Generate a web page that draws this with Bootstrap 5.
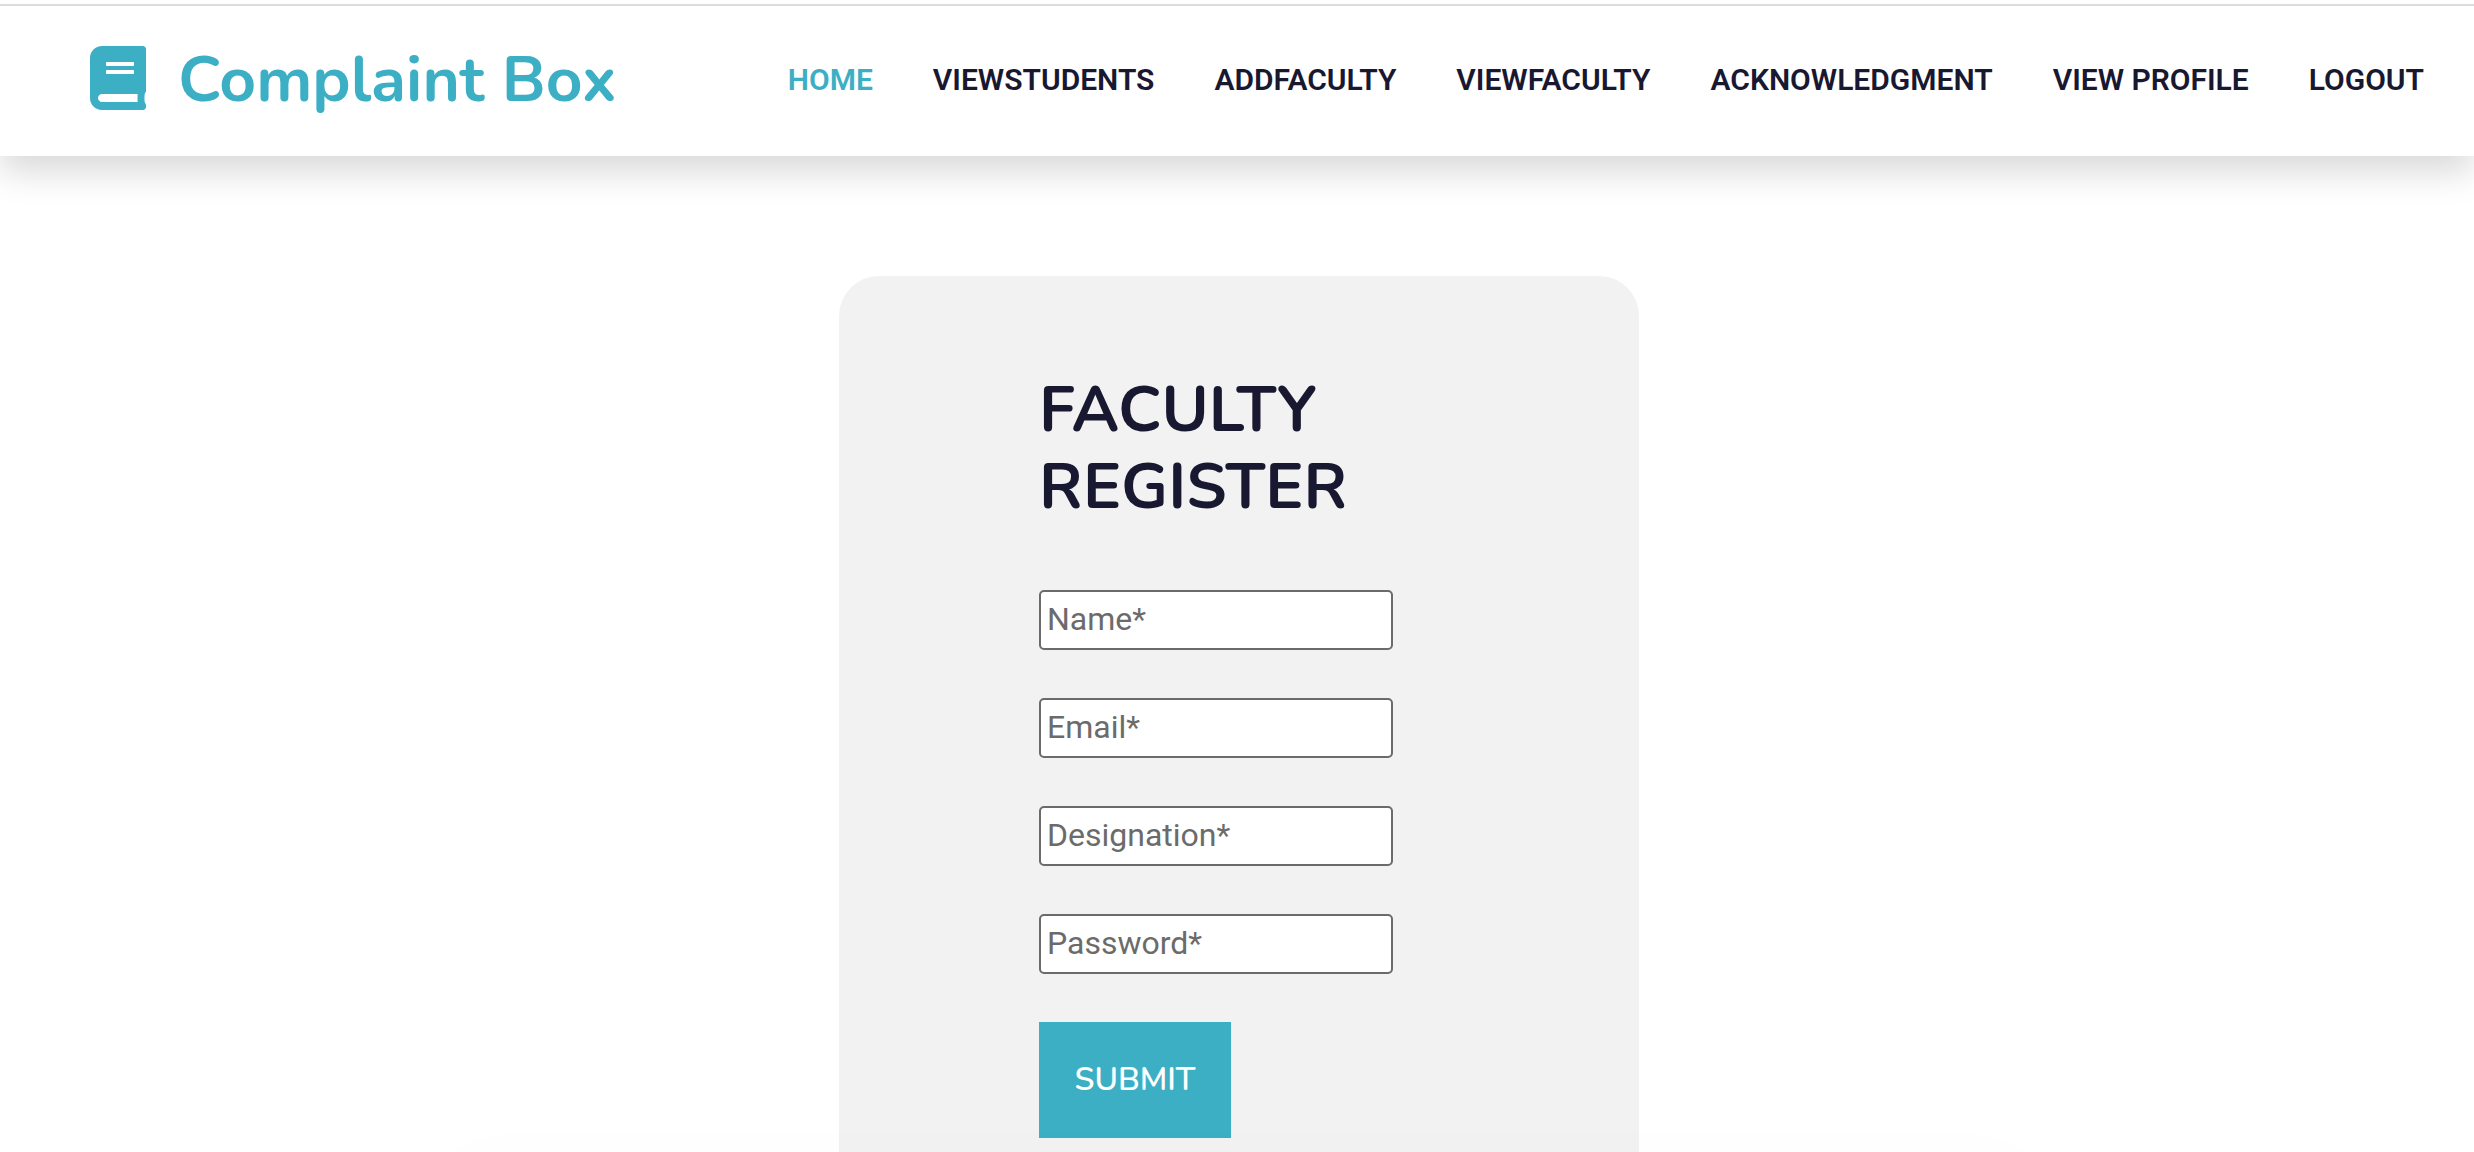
<!DOCTYPE html>
<html lang="en">
<head>
<meta charset="utf-8">
<meta name="viewport" content="width=device-width, initial-scale=1">
<title>Complaint Box</title>
<link href="https://cdn.jsdelivr.net/npm/bootstrap@5.3.0/dist/css/bootstrap.min.css" rel="stylesheet">
<style>
  :root { --brand: #3cafc5; --ink: #191831; --panel: #f2f2f2; --field: #6b6b6b; }
  body { font-family: Roboto, "Liberation Sans", sans-serif; font-size: 32px; color: var(--ink); background: #fff; }
  .site-header { padding-top: 4px; box-shadow: 0 16px 32px rgba(0, 0, 0, .15); }
  .site-bar { border-top: 2px solid #dcdcdc; min-height: 152px; padding: 0 50px 2px 90px; }
  .heading-font { font-family: Nunito, Lato, "Open Sans", sans-serif; }
  .brand-name { font-size: 64px; line-height: 76px; color: var(--brand); }
  .brand-icon { width: 56px; height: 64px; margin-bottom: 4px; fill: var(--brand); }
  .site-nav { gap: 60px; }
  .site-nav .nav-link { font-size: 30px; line-height: 36px; font-weight: 600; color: var(--ink); }
  .site-nav .nav-link.active, .site-nav .nav-link:hover { color: var(--brand); }
  .page-main { padding-top: 120px; }
  .register-panel { width: 800px; max-width: 100%; padding: 96px 200px 14px; background: var(--panel); border-radius: 40px 40px 0 0; }
  .register-title { font-size: 64px; line-height: 77px; margin-bottom: 64px; color: var(--ink); }
  .register-form { gap: 48px; }
  .register-form .form-control { width: 354px; max-width: 100%; height: 60px; padding: 0 6px 2px; font-size: 32px; line-height: 40px; border: 2px solid var(--field); border-radius: 5px; }
  .register-form .form-control::placeholder { color: var(--field); }
  .submit-btn, .submit-btn:hover { width: 192px; height: 116px; padding: 0; font-size: 32px; font-weight: 600; color: #fff; background: var(--brand); border: 0; border-radius: 0; }
  .edge-shade { height: 20px; margin: 0 18% -48px; box-shadow: 0 0 80px rgba(0, 0, 0, .05); pointer-events: none; }
</style>
<script src="https://cdn.jsdelivr.net/npm/bootstrap@5.3.0/dist/js/bootstrap.bundle.min.js"></script>
</head>
<body class="d-flex flex-column min-vh-100">
<header class="site-header bg-white">
  <nav class="site-bar navbar navbar-expand d-flex justify-content-between align-items-center">
    <a class="navbar-brand d-flex align-items-center m-0 p-0" href="#">
      <svg class="brand-icon" viewBox="0 0 448 512" aria-hidden="true"><path d="M448 360V24c0-13.300-10.700-24-24-24H96C43 0 0 43 0 96v320c0 53 43 96 96 96h328c13.300 0 24-10.700 24-24v-16c0-7.500-3.500-14.300-8.900-18.700-4.200-15.400-4.200-59.300 0-74.700 5.400-4.300 8.900-11.100 8.900-18.600zM128 134c0-3.300 2.700-6 6-6h212c3.300 0 6 2.700 6 6v20c0 3.300-2.700 6-6 6H134c-3.300 0-6-2.700-6-6v-20zm0 64c0-3.300 2.700-6 6-6h212c3.300 0 6 2.700 6 6v20c0 3.300-2.700 6-6 6H134c-3.300 0-6-2.700-6-6v-20zm253.400 250H96c-17.700 0-32-14.300-32-32 0-17.600 14.400-32 32-32h285.400c-1.900 17.100-1.900 46.900 0 64z"/></svg>
      <span class="brand-name heading-font fw-bold ms-3 ps-3">Complaint Box</span>
    </a>
    <div class="site-nav navbar-nav text-uppercase">
      <a class="nav-link p-0 active" aria-current="page" href="#">Home</a>
      <a class="nav-link p-0" href="#">ViewStudents</a>
      <a class="nav-link p-0" href="#">AddFaculty</a>
      <a class="nav-link p-0" href="#">ViewFaculty</a>
      <a class="nav-link p-0" href="#">Acknowledgment</a>
      <a class="nav-link p-0" href="#">View Profile</a>
      <a class="nav-link p-0" href="#">Logout</a>
    </div>
  </nav>
</header>
<main class="page-main flex-grow-1 d-flex justify-content-center ps-1">
  <section class="register-panel">
    <h1 class="register-title heading-font fw-bold">FACULTY REGISTER</h1>
    <form class="register-form d-flex flex-column align-items-start">
      <input class="form-control" type="text" placeholder="Name*" aria-label="Name">
      <input class="form-control" type="email" placeholder="Email*" aria-label="Email">
      <input class="form-control" type="text" placeholder="Designation*" aria-label="Designation">
      <input class="form-control" type="password" placeholder="Password*" aria-label="Password">
      <button class="submit-btn btn heading-font" type="submit">SUBMIT</button>
    </form>
  </section>
</main>
<div class="edge-shade fixed-bottom" aria-hidden="true"></div>
</body>
</html>
